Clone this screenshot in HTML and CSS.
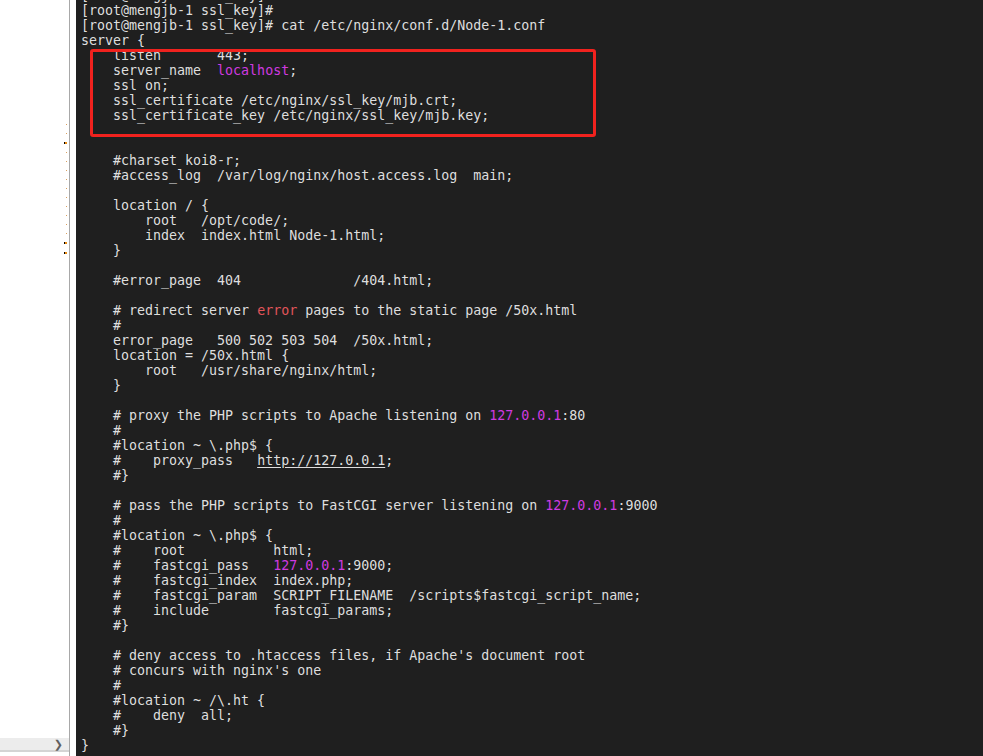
FILE: index.html
```html
<!DOCTYPE html>
<html>
<head>
<meta charset="utf-8">
<link rel="stylesheet" href="styles.css">
</head>
<body>
<div class="page">
  <aside class="side">
    <div class="side-col">
      <div class="dots">
        <span class="dot"></span><span class="dot"></span><span class="dot big"></span>
        <span class="dot"></span><span class="dot"></span><span class="dot"></span><span class="dot"></span>
        <span class="dot"></span><span class="dot"></span><span class="dot"></span><span class="dot"></span>
        <span class="dot"></span><span class="dot"></span><span class="dot big"></span><span class="dot big"></span>
      </div>
      <div class="hscroll"><span class="chev">&#x276F;</span></div>
    </div>
  </aside>
  <main class="term">
<pre class="code">[root@mengjb-1 ssl_key]#
[root@mengjb-1 ssl_key]#
[root@mengjb-1 ssl_key]# cat /etc/nginx/conf.d/Node-1.conf
server {
    listen       443;
    server_name  <span class="mag">localhost</span>;
    ssl on;
    ssl_certificate /etc/nginx/ssl_key/mjb.crt;
    ssl_certificate_key /etc/nginx/ssl_key/mjb.key;


    #charset koi8-r;
    #access_log  /var/log/nginx/host.access.log  main;

    location / {
        root   /opt/code/;
        index  index.html Node-1.html;
    }

    #error_page  404              /404.html;

    # redirect server <span class="red">error</span> pages to the static page /50x.html
    #
    error_page   500 502 503 504  /50x.html;
    location = /50x.html {
        root   /usr/share/nginx/html;
    }

    # proxy the PHP scripts to Apache listening on <span class="mag">127.0.0.1</span>:80
    #
    #location ~ \.php$ {
    #    proxy_pass   <span class="ul">http://127.0.0.1</span>;
    #}

    # pass the PHP scripts to FastCGI server listening on <span class="mag">127.0.0.1</span>:9000
    #
    #location ~ \.php$ {
    #    root           html;
    #    fastcgi_pass   <span class="mag">127.0.0.1</span>:9000;
    #    fastcgi_index  index.php;
    #    fastcgi_param  SCRIPT_FILENAME  /scripts$fastcgi_script_name;
    #    include        fastcgi_params;
    #}

    # deny access to .htaccess files, if Apache's document root
    # concurs with nginx's one
    #
    #location ~ /\.ht {
    #    deny  all;
    #}
}
</pre>
    <div class="mark"></div>
  </main>
</div>
</body>
</html>
```

FILE: styles.css
```css
html, body {
  margin: 0;
  padding: 0;
  background: #ffffff;
  overflow: hidden;
}

.page {
  display: flex;
  width: 983px;
  height: 756px;
}

.side {
  width: 76px;
  flex: none;
  background: #ffffff;
}

.side-col {
  width: 70px;
  height: 756px;
  border-right: 1px solid #a8a8a8;
  display: flex;
  flex-direction: column;
  justify-content: space-between;
  align-items: flex-end;
  box-sizing: border-box;
}

.dots {
  margin-top: 124px;
  margin-right: 2px;
  display: flex;
  flex-direction: column;
  gap: 7px;
  align-items: flex-end;
}

.dot {
  display: block;
  width: 1px;
  height: 1px;
  background: #d9a060;
  margin-bottom: 1px;
}

.dot.big {
  width: 2px;
  height: 2px;
  background: #e88a10;
  box-shadow: -1px 0 0 #000;
}

.hscroll {
  width: 69px;
  height: 14px;
  margin-bottom: 4px;
  background: #ececec;
  border-bottom: 2px solid #d4d4d4;
  display: flex;
  align-items: center;
  justify-content: flex-end;
  padding-right: 6px;
  box-sizing: border-box;
}

.chev {
  font-family: "DejaVu Sans", sans-serif;
  font-size: 11px;
  color: #606060;
  line-height: 1;
}

.term {
  flex: 1;
  position: relative;
  background: #1f1f1f;
  overflow: hidden;
}

.code {
  margin: -12px 0 0 0;
  padding: 0 0 0 5px;
  font-family: "DejaVu Sans Mono", monospace;
  font-size: 13.3px;
  line-height: 15px;
  color: #dedede;
  white-space: pre;
}

.mag {
  color: #d03ae0;
}

.red {
  color: #e2555a;
}

.ul {
  text-decoration: underline;
  text-underline-offset: 2px;
}

.mark {
  position: absolute;
  left: 14px;
  top: 49px;
  width: 506px;
  height: 88px;
  border: 3px solid #f0221e;
  border-radius: 3px;
  box-sizing: border-box;
}
```
